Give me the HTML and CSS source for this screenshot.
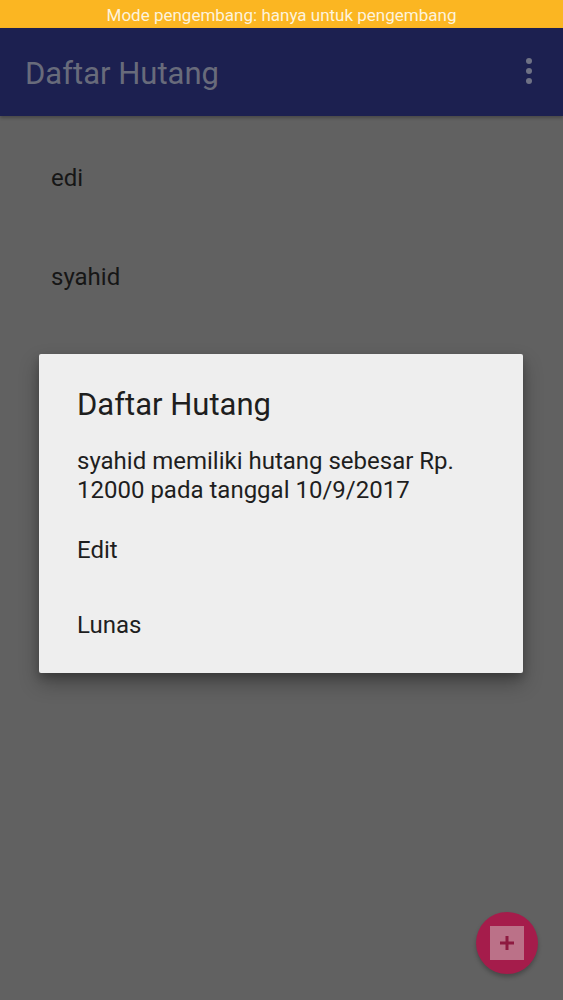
FILE: index.html
```html
<!DOCTYPE html>
<html lang="id">
<head>
<meta charset="utf-8">
<title>Daftar Hutang</title>
<link rel="stylesheet" href="styles.css">
</head>
<body>
<div class="screen">
  <div class="status-bar">Mode pengembang: hanya untuk pengembang</div>
  <header class="app-bar">
    <h1 class="app-title">Daftar Hutang</h1>
    <div class="overflow">
      <span class="dot"></span><span class="dot"></span><span class="dot"></span>
    </div>
  </header>
  <ul class="list">
    <li class="list-item">edi</li>
    <li class="list-item">syahid</li>
  </ul>
  <div class="fab">
    <div class="fab-inner">
      <svg width="20" height="20" viewBox="0 0 20 20"><path d="M10 3v14M3 10h14" stroke="#8e1a40" stroke-width="3"/></svg>
    </div>
  </div>
  <div class="scrim">
    <div class="dialog">
      <h2 class="dialog-title">Daftar Hutang</h2>
      <p class="dialog-message">syahid memiliki hutang sebesar Rp. 12000 pada tanggal 10/9/2017</p>
      <div class="dialog-option">Edit</div>
      <div class="dialog-option">Lunas</div>
    </div>
  </div>
</div>
</body>
</html>
```
FILE: styles.css
```css
* { box-sizing: border-box; }
html, body { margin: 0; padding: 0; }
body {
  font-family: Roboto, "Noto Sans", "Liberation Sans", sans-serif;
  background: #616161;
}
.screen {
  position: relative;
  width: 563px;
  height: 1000px;
  overflow: hidden;
  background: #616161;
}
.status-bar {
  height: 28px;
  background: #fbb622;
  color: #fdf3dc;
  font-size: 17px;
  line-height: 30px;
  text-align: center;
}
.app-bar {
  height: 88px;
  background: #1c2050;
  display: flex;
  align-items: center;
  justify-content: space-between;
  padding: 2px 25px 0 25px;
  box-shadow: 0 2px 3px rgba(0,0,0,0.25);
}
.app-title {
  margin: 0;
  font-weight: 400;
  font-size: 31px;
  color: #686b7b;
}
.overflow {
  display: flex;
  flex-direction: column;
  gap: 4px;
  margin-right: 6px;
  margin-top: -4px;
}
.dot {
  width: 6px;
  height: 6px;
  border-radius: 50%;
  background: #6f7285;
}
.list {
  list-style: none;
  margin: 0;
  padding: 14px 0 0 0;
}
.list-item {
  height: 99px;
  padding: 34px 0 0 51px;
  font-size: 24px;
  color: #161616;
}
.fab {
  position: absolute;
  left: 476px;
  top: 912px;
  width: 62px;
  height: 62px;
  border-radius: 50%;
  background: #a51c4b;
  display: flex;
  align-items: center;
  justify-content: center;
  box-shadow: 0 3px 4px rgba(0,0,0,0.25);
}
.fab-inner {
  width: 34px;
  height: 34px;
  background: #bb7188;
  display: flex;
  align-items: center;
  justify-content: center;
}
.scrim {
  position: absolute;
  left: 0;
  top: 0;
  right: 0;
  bottom: 0;
}
.dialog {
  position: absolute;
  left: 39px;
  top: 354px;
  width: 484px;
  height: 319px;
  background: #eeeeee;
  border-radius: 2px;
  padding: 32px 38px 0 38px;
  box-shadow: 0 10px 20px rgba(0,0,0,0.3), 0 4px 8px rgba(0,0,0,0.2);
  color: #1e1e1e;
}
.dialog-title {
  margin: 0;
  font-weight: 400;
  font-size: 31px;
  line-height: 38px;
}
.dialog-message {
  margin: 23px 0 0 0;
  font-size: 24px;
  line-height: 29px;
}
.dialog-option {
  font-size: 24px;
  height: 75px;
  line-height: 75px;
}
.dialog-message + .dialog-option { margin-top: 8px; }
```
